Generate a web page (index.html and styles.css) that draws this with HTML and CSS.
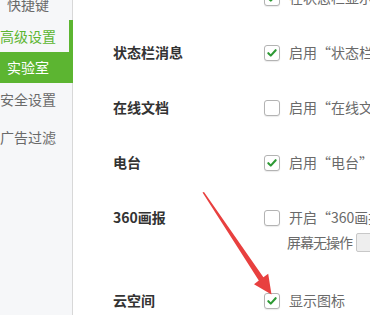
FILE: index.html
```html
<!DOCTYPE html>
<html lang="zh-CN">
<head>
<meta charset="utf-8">
<link rel="stylesheet" href="styles.css">
</head>
<body>
<div class="page">
  <nav class="sidebar">
    <div class="nav-item first">快捷键</div>
    <div class="nav-item parent">高级设置</div>
    <div class="nav-item active">实验室</div>
    <div class="nav-item">安全设置</div>
    <div class="nav-item spaced">广告过滤</div>
  </nav>
  <main class="content">
    <div class="row first-row">
      <div class="label"></div>
      <div class="opts">
        <div class="line"><span class="cb checked"><svg viewBox="0 0 16 16"><path d="M3.8 8.2 L6.6 11 L12.2 4.8"/></svg></span><span class="txt">在状态栏显示下载速度</span></div>
      </div>
    </div>
    <div class="row">
      <div class="label">状态栏消息</div>
      <div class="opts">
        <div class="line"><span class="cb checked"><svg viewBox="0 0 16 16"><path d="M3.8 8.2 L6.6 11 L12.2 4.8"/></svg></span><span class="txt">启用“状态栏消息”功能</span></div>
      </div>
    </div>
    <div class="row">
      <div class="label">在线文档</div>
      <div class="opts">
        <div class="line"><span class="cb"></span><span class="txt">启用“在线文档”功能</span></div>
      </div>
    </div>
    <div class="row">
      <div class="label">电台</div>
      <div class="opts">
        <div class="line"><span class="cb checked"><svg viewBox="0 0 16 16"><path d="M3.8 8.2 L6.6 11 L12.2 4.8"/></svg></span><span class="txt">启用“电台”功能</span></div>
      </div>
    </div>
    <div class="row tall">
      <div class="label">360画报</div>
      <div class="opts">
        <div class="line"><span class="cb"></span><span class="txt">开启“360画报”屏保</span></div>
        <div class="line sub"><span class="txt tight">屏幕无操作</span><span class="field"></span></div>
      </div>
    </div>
    <div class="row">
      <div class="label">云空间</div>
      <div class="opts">
        <div class="line"><span class="cb checked"><svg viewBox="0 0 16 16"><path d="M3.8 8.2 L6.6 11 L12.2 4.8"/></svg></span><span class="txt">显示图标</span></div>
      </div>
    </div>
  </main>
  <svg class="arrow" viewBox="0 0 370 315" width="370" height="315">
    <polygon points="202.5,192.5 204,192 263.4,277.2 268.2,273.8 271.5,294.5 254,284.2 258.8,280.6"/>
  </svg>
</div>
</body>
</html>
```

FILE: styles.css
```css
html, body {
  margin: 0;
  padding: 0;
  background: #ffffff;
}

body {
  font-family: "Noto Sans CJK SC", "Noto Sans", "DejaVu Sans", sans-serif;
  font-size: 14px;
  color: #333333;
}

.page {
  position: relative;
  display: flex;
  width: 370px;
  height: 315px;
  overflow: hidden;
}

.sidebar {
  width: 72px;
  flex: 0 0 72px;
  background: #f6f7f9;
  border-right: 1px solid #d8d8d8;
  display: flex;
  flex-direction: column;
}

.nav-item {
  height: 32px;
  line-height: 32px;
  text-align: right;
  padding-right: 24px;
  margin-right: -1px;
  color: #6a6a6a;
  white-space: nowrap;
}

.nav-item.first {
  margin-top: -12px;
}

.nav-item.parent {
  color: #5cb531;
  box-shadow: inset -4px 0 0 #5cb531;
}

.nav-item.active {
  height: 31px;
  line-height: 31px;
  background: #5cb531;
  color: #ffffff;
}

.nav-item.spaced {
  margin-top: 6px;
}

.content {
  flex: 1;
  padding-left: 40px;
  margin-top: -30px;
  display: flex;
  flex-direction: column;
}

.row {
  display: flex;
  padding: 15px 0;
}

.row.tall {
  padding-bottom: 18px;
}

.label {
  width: 151px;
  flex: 0 0 151px;
  line-height: 25px;
  height: 25px;
  font-weight: bold;
  color: #333333;
  white-space: nowrap;
}

.opts {
  display: flex;
  flex-direction: column;
  white-space: nowrap;
}

.line {
  height: 25px;
  display: flex;
  align-items: center;
}

.line.sub {
  padding-left: 23px;
}

.cb {
  width: 14px;
  height: 14px;
  border: 1px solid #b3b3b3;
  border-radius: 3px;
  background: #ffffff;
  box-shadow: 0 1px 1px rgba(0, 0, 0, 0.08);
  display: inline-flex;
  align-items: center;
  justify-content: center;
  margin-right: 9px;
  flex: 0 0 auto;
}

.cb svg {
  width: 14px;
  height: 14px;
}

.cb svg path {
  fill: none;
  stroke: #2e9a35;
  stroke-width: 2.4;
  stroke-linecap: round;
  stroke-linejoin: round;
}

.txt {
  color: #6a6a6a;
  line-height: 25px;
}

.txt.tight {
  letter-spacing: -1px;
}

.field {
  display: inline-block;
  width: 40px;
  height: 17px;
  margin-left: 4px;
  background: #eeeeee;
  border: 1px solid #c8c8c8;
  border-radius: 2px;
}

.arrow {
  position: absolute;
  left: 0;
  top: 0;
  pointer-events: none;
}

.arrow polygon {
  fill: #e8403f;
}
```
